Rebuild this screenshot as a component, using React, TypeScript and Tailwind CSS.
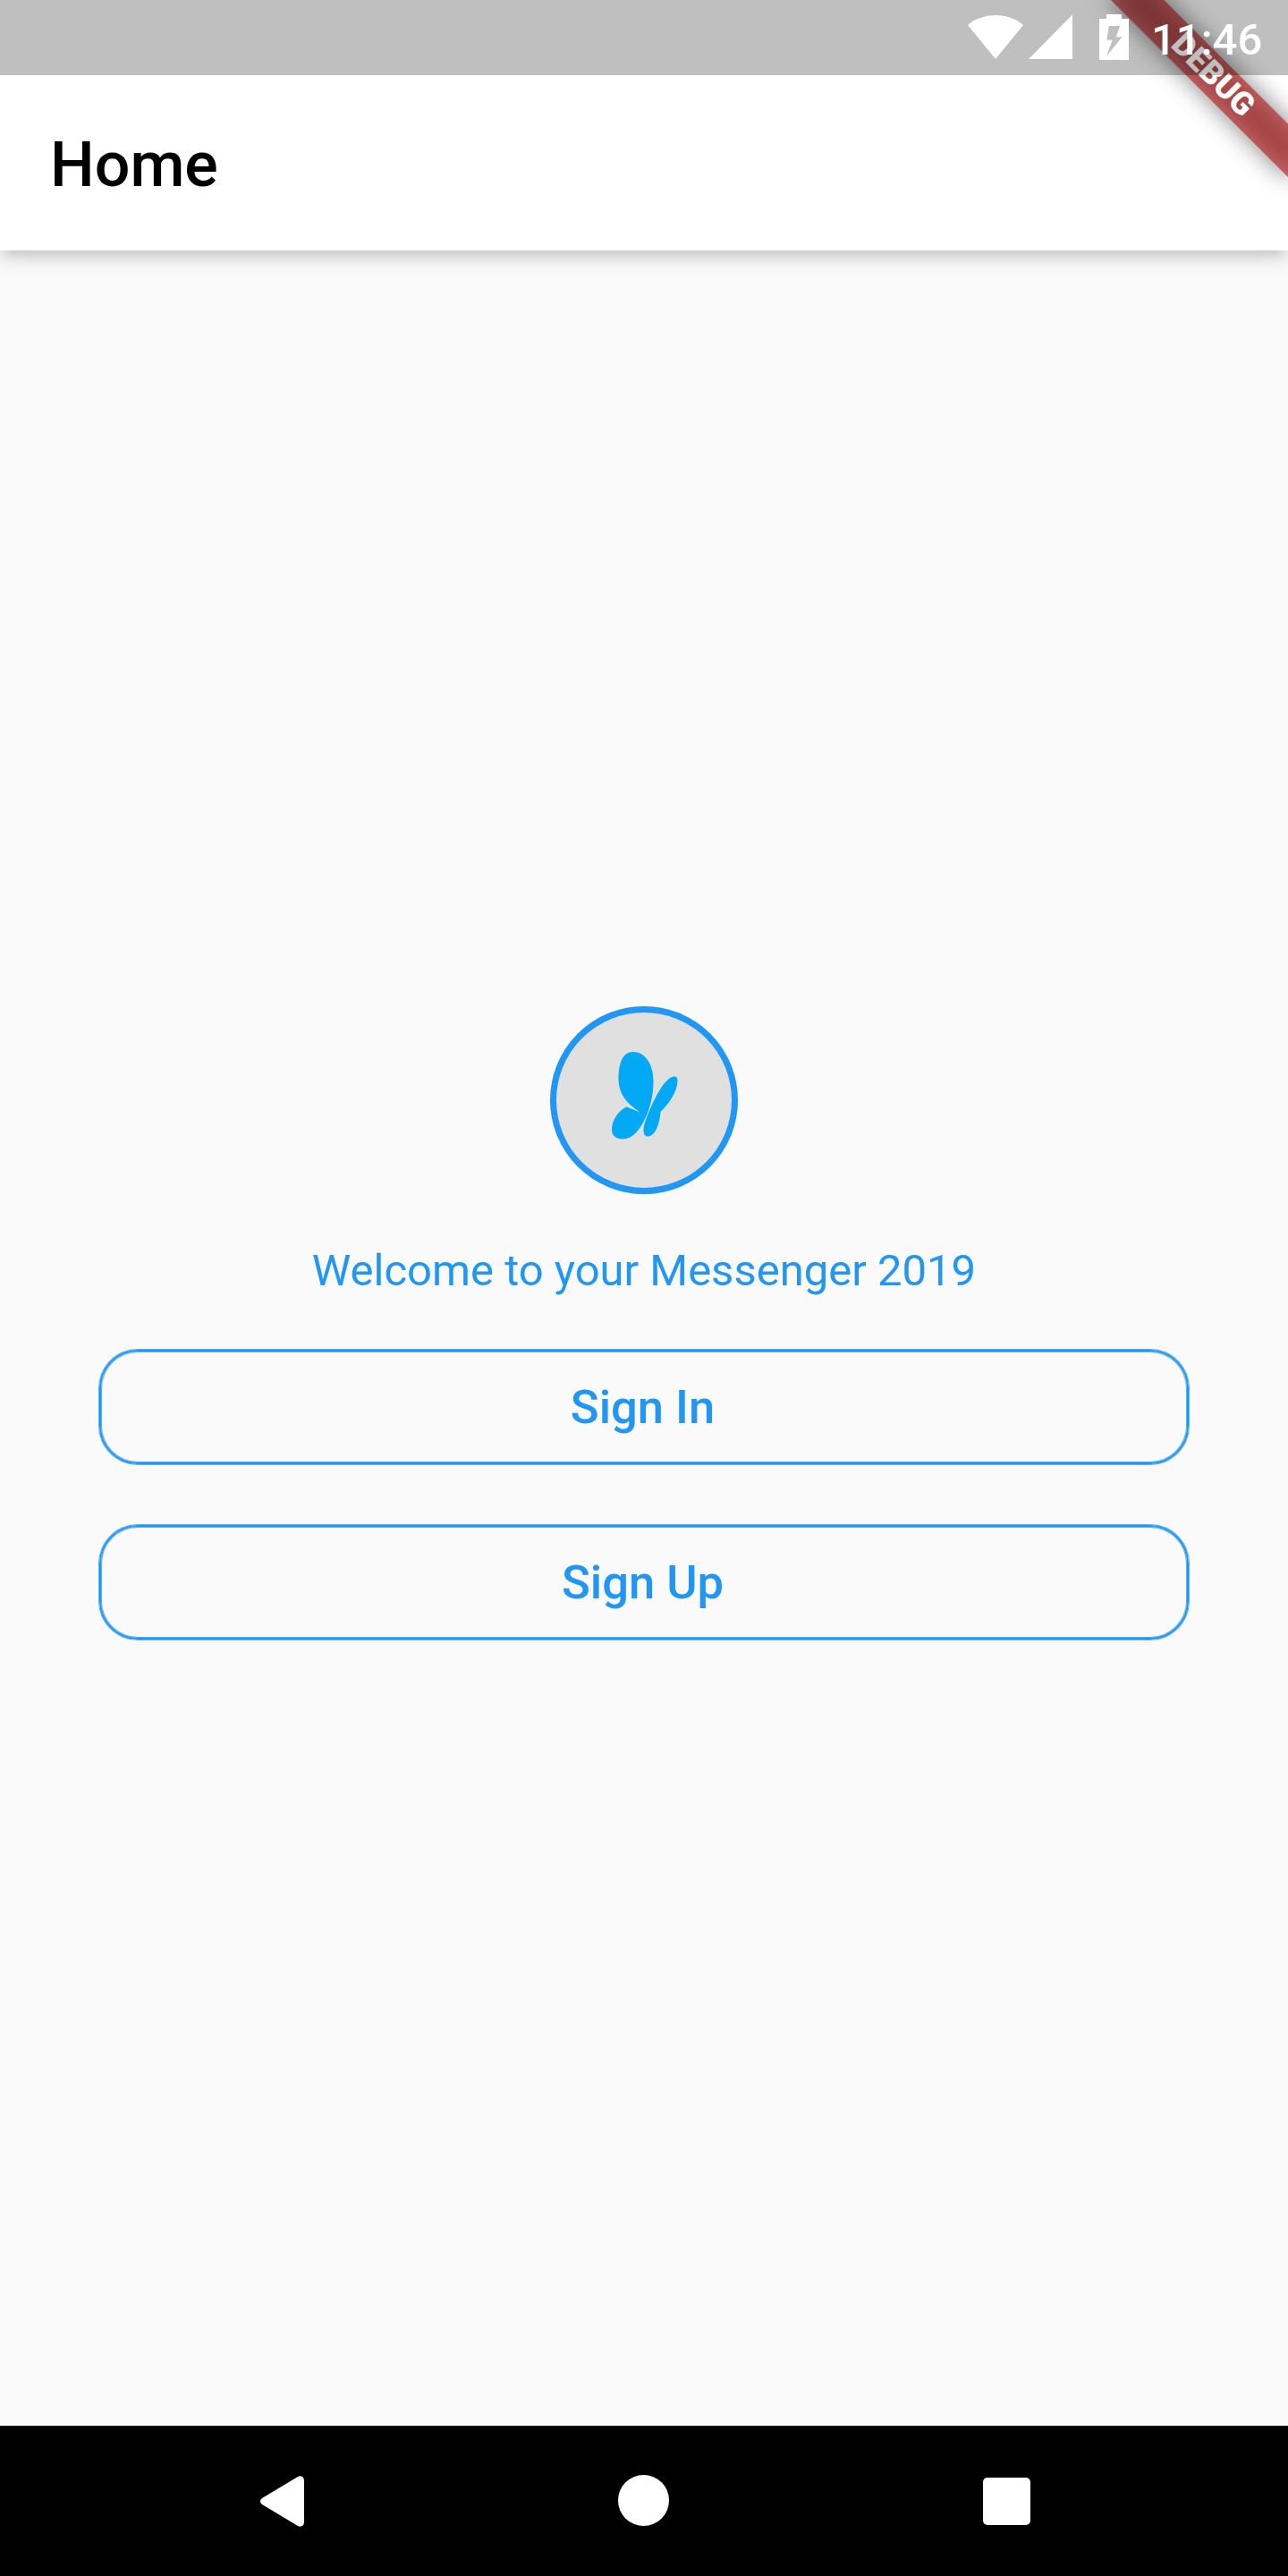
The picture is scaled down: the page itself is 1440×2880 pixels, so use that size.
import React from "react";

const roboto = "font-['Roboto',sans-serif]";

function DebugBanner() {
  return (
    <div className="absolute top-0 right-0 h-[400px] w-[400px] overflow-hidden">
      <div className="absolute top-0 left-full h-0 w-0 origin-top-left rotate-45">
        <div className="absolute top-[98px] left-[-140px] h-[42px] w-[280px] bg-[#0000007f] blur-[13.9px]" />
        <div className="absolute top-[98px] left-[-140px] flex h-[42px] w-[280px] items-center justify-center bg-[#b71c1ca0] text-[35.7px] leading-none font-black text-white">
          DEBUG
        </div>
      </div>
    </div>
  );
}

function StatusBar() {
  return (
    <div className="absolute inset-x-0 top-0 flex h-[84px] items-start bg-black/25 pl-[1081px] text-white">
      <svg className="mt-[16px] h-[50px] w-[64px] shrink-0" viewBox="0 0 64 50" fill="currentColor">
        <path d="M1 12C9 5 19.500 1 32 1S55 5 63 12L32 50Z" />
      </svg>
      <svg className="mt-[16px] ml-[5px] h-[50px] w-[49px] shrink-0" viewBox="0 0 49 50" fill="currentColor">
        <path d="M49 .5V50H0Z" />
      </svg>
      <svg className="mt-[16px] ml-[30px] h-[51px] w-[33px] shrink-0" viewBox="0 0 33 51" fill="currentColor">
        <path
          fillRule="evenodd"
          d="M8 0H25V5H33V51H0V5H8ZM11 13L8.500 28.500H15L8.500 46L25 25.500H18.500L23 13Z"
        />
        <path d="M11 13L8.500 28.500H15L8.500 46L25 25.500H18.500L23 13Z" fill="#bfbfbf" />
      </svg>
      <span className="mt-[16px] ml-[25px] text-[49px] leading-[58px] font-medium">11:46</span>
    </div>
  );
}

function Butterfly() {
  return (
    <svg className="mb-[10px] ml-[1px] h-[98px] w-[74px]" viewBox="0 0 74 98" fill="#03a9f4">
      <path d="M23.500 0C37 0 46.500 13 46.500 33C46.500 46 44 57.500 40.500 67C36.500 77 28 97.500 12 97.500C5 97.500 0 94 0 87C0 76 8 65 16.500 61.500L31.500 67.500C17 58 7.500 47 7.500 31C7.500 11 13 0 23.500 0Z" />
      <path d="M70 27.500C73 27.500 73.500 30 73.500 32C73.500 44 64 58 54.500 67C53.500 82 48 94.500 40 94.500C37 94.500 35.500 92 35.500 87C35.500 83 37 79 38 76C46 55 59 27.500 70 27.500Z" />
    </svg>
  );
}

function OutlineButton({ children }: { children: React.ReactNode }) {
  return (
    <button className="mx-[111px] flex h-[128px] items-center justify-center rounded-[43px] border-2 border-[#2196f3] pr-[3px] text-[52.5px] leading-[62px] font-medium shadow-[0_0_0_1px_#2196f3bf,inset_0_0_0_1px_#2196f3bf]">
      {children}
    </button>
  );
}

export default function App() {
  return (
    <div className={`${roboto} relative flex h-[2880px] w-[1440px] flex-col overflow-hidden bg-[#fafafa]`}>
      <header className="relative flex h-[280px] items-center bg-white px-[56px] pt-[88px] shadow-[0_7px_14px_-3px_rgba(0,0,0,0.16),0_14px_18px_0_rgba(0,0,0,0.06),0_3px_35px_0_rgba(0,0,0,0.04)]">
        <h1 className="text-[70px] leading-[82px] font-medium text-black">Home</h1>
      </header>
      <main className="flex grow flex-col pt-[845px] text-[#2196f3]">
        <div className="flex h-[210px] w-[210px] items-center justify-center self-center rounded-full border-[7px] border-[#2196f3] bg-[#e0e0e0]">
          <Butterfly />
        </div>
        <p className="mt-[57px] text-center text-[49px] leading-[58px]">Welcome to your Messenger 2019</p>
        <div className="mt-[59px] flex flex-col gap-[68px]">
          <OutlineButton>Sign In</OutlineButton>
          <OutlineButton>Sign Up</OutlineButton>
        </div>
      </main>
      <nav className="flex h-[168px] items-start bg-black text-white">
        <svg className="mt-[56px] ml-[291px] h-[57px] w-[49px]" viewBox="0 0 49 57" fill="currentColor">
          <path d="M2 25L42 1Q45 -.5 47.500 1.500Q49 3 49 5V52Q49 54 47.500 55.500Q45 57.500 42 56L2 32Q0 30.500 0 28.500Q0 26.500 2 25Z" />
        </svg>
        <div className="mt-[55px] ml-[351px] size-[57px] rounded-full bg-white" />
        <div className="mt-[58px] ml-[351px] size-[53px] rounded-[5px] bg-white" />
      </nav>
      <DebugBanner />
      <StatusBar />
    </div>
  );
}
